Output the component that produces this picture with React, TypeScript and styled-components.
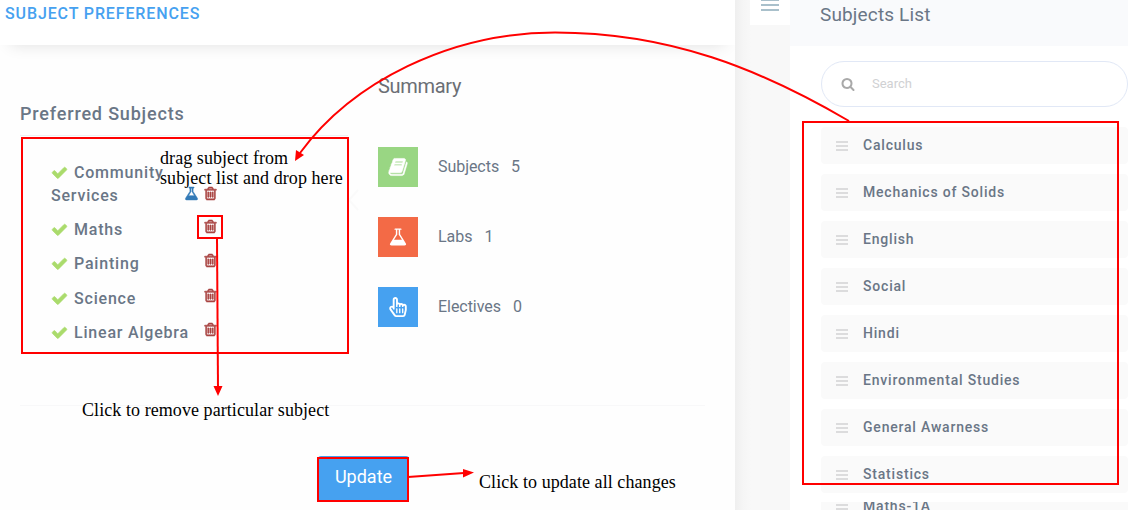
import React from "react";
import styled, { createGlobalStyle } from "styled-components";
import { FaRegHandPointer } from "react-icons/fa";

const GlobalStyle = createGlobalStyle`
  * { box-sizing: border-box; }
  body {
    margin: 0;
    overflow: hidden;
    background: #fff;
    font-family: Roboto, "Liberation Sans", sans-serif;
    color: #6a7686;
  }
  h1, h2, h3, ul { margin: 0; padding: 0; font-weight: 400; }
  ul { list-style: none; }
  svg { display: block; }
`;

const icons = {
  trash:
    "M704 736v576q0 14-9 23t-23 9h-64q-14 0-23-9t-9-23v-576q0-14 9-23t23-9h64q14 0 23 9t9 23zm256 0v576q0 14-9 23t-23 9h-64q-14 0-23-9t-9-23v-576q0-14 9-23t23-9h64q14 0 23 9t9 23zm256 0v576q0 14-9 23t-23 9h-64q-14 0-23-9t-9-23v-576q0-14 9-23t23-9h64q14 0 23 9t9 23zm128 724v-948h-896v948q0 22 7 40.5t14.5 27 10.5 8.5h832q3 0 10.5-8.5t14.5-27 7-40.5zm-672-1076h448l-48-117q-7-9-17-11h-317q-10 2-17 11zm928 32v64q0 14-9 23t-23 9h-96v948q0 83-47 143.5t-113 60.5h-832q-66 0-113-58.5t-47-141.5v-952h-96q-14 0-23-9t-9-23v-64q0-14 9-23t23-9h309l70-167q15-37 54-63t79-26h320q40 0 79 26t54 63l70 167h309q14 0 23 9t9 23z",
  check:
    "M1671 566q0 40-28 68l-724 724-136 136q-28 28-68 28t-68-28l-136-136-362-362q-28-28-28-68t28-68l136-136q28-28 68-28t68 28l294 295 656-657q28-28 68-28t68 28l136 136q28 28 28 68z",
  flask:
    "M1591 1448q56 89 21.5 152.5t-140.5 63.5h-1152q-106 0-140.5-63.5t21.5-152.5l503-793v-399h-64q-26 0-45-19t-19-45 19-45 45-19h512q26 0 45 19t19 45-19 45-45 19h-64v399zm-779-725l-272 429h712l-272-429-20-31v-436h-128v436z",
  search:
    "M1216 832q0-185-131.5-316.5t-316.5-131.5-316.5 131.5-131.5 316.5 131.5 316.5 316.5 131.5 316.5-131.5 131.5-316.5zm512 832q0 52-38 90t-90 38q-54 0-90-38l-343-342q-179 124-399 124-143 0-273.5-55.5t-225-150-150-225-55.5-273.5 55.5-273.5 150-225 225-150 273.5-55.5 273.5 55.5 225 150 150 225 55.5 273.5q0 220-124 399l343 343q37 37 37 90z",
  book:
    "M1703 478q40 57 18 129l-275 906q-19 64-76.5 107.5t-122.5 43.5h-923q-77 0-148.5-53.5t-99.5-131.5q-24-67-2-127 0-4 3-27t4-37q1-8-3-21.5t-3-19.5q2-11 8-21t16.5-23.5 16.5-23.5q23-38 45-91.5t30-91.5q3-10 .5-30t-.5-28q3-11 17-28t17-23q21-36 42-92t25-90q1-9-2.5-32t.5-28q4-13 22-30.5t22-22.5q19-26 42.5-84.5t27.5-96.5q1-8-3-25.5t-2-26.5q2-8 9-18t18-23 17-21q8-12 16.5-30.5t15-35 16-36 19.5-32 26.5-23.5 36-11.5 47.5 5.5l-1 3q38-9 51-9h761q74 0 114 56t18 130l-274 906q-36 119-71.5 153.5t-128.5 34.5h-869q-27 0-38 15-11 16-1 43 24 70 144 70h923q29 0 56-15.5t35-41.5l300-987q7-22 5-57 38 15 59 43zm-1064 2q-4 13 2 22.5t20 9.5h608q13 0 25.5-9.5t16.5-22.5l21-64q4-13-2-22.5t-20-9.5h-608q-13 0-25.5 9.5t-16.5 22.5zm-83 256q-4 13 2 22.5t20 9.5h608q13 0 25.5-9.5t16.5-22.5l21-64q4-13-2-22.5t-20-9.5h-608q-13 0-25.5 9.5t-16.5 22.5z",
};

type IconName = keyof typeof icons;

interface IconProps {
  name: IconName;
  size: number;
  color: string;
  weight?: number;
}

function Icon({ name, size, color, weight = 0 }: IconProps) {
  return (
    <svg width={size} height={size} viewBox="0 0 1792 1792" fill={color} stroke={color} strokeWidth={weight}>
      <path d={icons[name]} />
    </svg>
  );
}

const Page = styled.div`
  position: relative;
  display: flex;
  width: 1128px;
  height: 510px;
  overflow: hidden;
`;

const Main = styled.main`
  display: flex;
  flex-direction: column;
  width: 735px;
  background: #fefefe;
`;

const MainHeader = styled.header`
  height: 45px;
  padding: 4px 5px 0;
  background: #fff;
  box-shadow: 0 10px 16px -10px rgba(0, 0, 0, 0.12);
`;

const PageTitle = styled.h1`
  font-size: 16px;
  line-height: 20px;
  font-weight: 500;
  letter-spacing: 0.88px;
  color: #46a1f0;
`;

const Columns = styled.div`
  display: flex;
  height: 361px;
  margin: 0 30px 0 20px;
  border-bottom: 1px solid #f8f8f9;
`;

const Preferred = styled.section`
  width: 328px;
  margin-right: 30px;
  padding-top: 57px;
`;

const SectionTitle = styled.h2`
  font-size: 18px;
  line-height: 24px;
  font-weight: 500;
  letter-spacing: 0.82px;
`;

const DropZone = styled.ul`
  height: 217px;
  margin-top: 9px;
  padding: 25px 0 0 31px;
  border-top: 1px solid #eef0f2;
`;

const Chosen = styled.li<{ $tall?: boolean }>`
  display: flex;
  width: 167px;
  height: ${(p) => (p.$tall ? 57 : 34.3)}px;
  justify-content: space-between;
`;

const ChosenName = styled.div`
  flex: 1;
  font-size: 16px;
  line-height: 23px;
  font-weight: 500;
  letter-spacing: 0.8px;
  white-space: nowrap;

  svg {
    display: inline-block;
    margin-right: 6px;
    vertical-align: -3px;
  }
`;

const ChosenActions = styled.div<{ $tall?: boolean }>`
  display: flex;
  gap: 4px;
  padding-top: ${(p) => (p.$tall ? 25 : 1)}px;
`;

const Summary = styled.section`
  padding-top: 27px;
`;

const SummaryTitle = styled.h2`
  height: 75px;
  font-size: 20px;
  line-height: 28px;
  letter-spacing: -0.3px;
  color: #6b6f75;
`;

const SummaryRow = styled.div`
  display: flex;
  height: 40px;
  margin-bottom: 30px;
  font-size: 16px;
  line-height: 39px;
  letter-spacing: -0.05px;
`;

const Tile = styled.div<{ $color: string }>`
  display: grid;
  place-items: center;
  width: 40px;
  height: 40px;
  margin-right: 20px;
  background: ${(p) => p.$color};
  color: #fff;
`;

const Count = styled.span`
  margin-left: 12px;
`;

const Footer = styled.footer`
  display: flex;
  padding: 50px 0 0 318px;
`;

const UpdateButton = styled.button`
  width: 91px;
  height: 45px;
  padding: 0 0 4px;
  border: 0;
  border-radius: 3px;
  background: #46a1f0;
  color: #fff;
  font: 400 18px Roboto, sans-serif;
`;

const Gutter = styled.div`
  display: flex;
  justify-content: flex-end;
  width: 55px;
  background: linear-gradient(90deg, #efefef 0, #f5f5f5 8px, #f8f8f8 16px);
`;

const MenuButton = styled.div`
  display: flex;
  flex-direction: column;
  align-items: center;
  gap: 3px;
  width: 40px;
  height: 25px;
  background: #fff;
`;

const MenuBar = styled.i<{ $first?: boolean }>`
  width: 18px;
  height: ${(p) => (p.$first ? 1 : 2)}px;
  background: #a9c0cb;
`;

const Sidebar = styled.aside`
  width: 338px;
  background: #fff;
`;

const SideHeader = styled.header`
  height: 46px;
  padding: 1px 30px;
  background: #f9fafc;
  font-size: 19px;
  line-height: 28px;
  letter-spacing: 0.15px;
`;

const SearchBox = styled.div`
  display: flex;
  align-items: center;
  gap: 17px;
  height: 46px;
  margin: 15px 0 20px 31px;
  padding: 0 0 1px 19px;
  border: 1px solid #e1e8f6;
  border-radius: 23px;
  color: #d0d1d3;
  font-size: 13px;
`;

const SubjectList = styled.ul`
  display: flex;
  flex-direction: column;
  gap: 10px;
  margin-left: 31px;
`;

const SubjectRow = styled.li`
  display: flex;
  align-items: center;
  gap: 15px;
  height: 37px;
  padding-left: 15px;
  border-radius: 4px;
  background: #fafafa;
  font-size: 14px;
  font-weight: 500;
  letter-spacing: 0.8px;
`;

const SubjectName = styled.span`
  padding-bottom: 2px;
`;

const Handle = styled.i`
  width: 12px;
  height: 10px;
  border: solid #dcdcdd;
  border-width: 2px 0;
  background: linear-gradient(#dcdcdd, #dcdcdd) 0 2px / 12px 2px no-repeat;
`;

const CutList = styled.div`
  height: 8px;
  margin: 9px 0 0 31px;
  overflow: hidden;
  display: flex;
  align-items: center;
  gap: 15px;
  padding-left: 15px;
  background: #fafafa;
  font-size: 14px;
  font-weight: 500;
  letter-spacing: 0.8px;
  line-height: 16px;
`;

const CutHandle = styled(Handle)`
  flex: none;
  margin-top: 6px;
`;

const Overlay = styled.svg`
  position: absolute;
  inset: 0;
`;

const Note = styled.p<{ $x: number; $y: number }>`
  position: absolute;
  left: ${(p) => p.$x}px;
  top: ${(p) => p.$y}px;
  margin: 0;
  color: #000;
  font: 18px/20px "Liberation Serif", serif;
  letter-spacing: 0.07px;
  white-space: nowrap;
`;

const chosen = ["Maths", "Painting", "Science", "Linear Algebra"];

const subjects = [
  "Calculus",
  "Mechanics of Solids",
  "English",
  "Social",
  "Hindi",
  "Environmental Studies",
  "General Awarness",
  "Statistics",
];

export default function App() {
  return (
    <Page>
      <GlobalStyle />
      <Main>
        <MainHeader>
          <PageTitle>SUBJECT PREFERENCES</PageTitle>
        </MainHeader>
        <Columns>
          <Preferred>
            <SectionTitle>Preferred Subjects</SectionTitle>
            <DropZone>
              <Chosen $tall>
                <ChosenName>
                  <Icon name="check" size={17} color="#aadb6c" weight={60} />
                  Community
                  <br />
                  Services
                </ChosenName>
                <ChosenActions $tall>
                  <Icon name="flask" size={15} color="#337ab7" weight={60} />
                  <Icon name="trash" size={15} color="#a94442" weight={75} />
                </ChosenActions>
              </Chosen>
              {chosen.map((name) => (
                <Chosen key={name}>
                  <ChosenName>
                    <Icon name="check" size={17} color="#aadb6c" weight={60} />
                    {name}
                  </ChosenName>
                  <ChosenActions>
                    <Icon name="trash" size={15} color="#a94442" weight={75} />
                  </ChosenActions>
                </Chosen>
              ))}
            </DropZone>
          </Preferred>
          <Summary>
            <SummaryTitle>Summary</SummaryTitle>
            <SummaryRow>
              <Tile $color="#99d683">
                <Icon name="book" size={20} color="#fff" weight={50} />
              </Tile>
              Subjects <Count>5</Count>
            </SummaryRow>
            <SummaryRow>
              <Tile $color="#f36a46">
                <Icon name="flask" size={20} color="#fff" />
              </Tile>
              Labs <Count>1</Count>
            </SummaryRow>
            <SummaryRow>
              <Tile $color="#46a1f0">
                <FaRegHandPointer size={20} />
              </Tile>
              Electives <Count>0</Count>
            </SummaryRow>
          </Summary>
        </Columns>
        <Footer>
          <UpdateButton>Update</UpdateButton>
        </Footer>
      </Main>
      <Gutter>
        <MenuButton>
          <MenuBar $first />
          <MenuBar />
          <MenuBar />
        </MenuButton>
      </Gutter>
      <Sidebar>
        <SideHeader>Subjects List</SideHeader>
        <SearchBox>
          <Icon name="search" size={14} color="#a9a9a9" />
          Search
        </SearchBox>
        <SubjectList>
          {subjects.map((name) => (
            <SubjectRow key={name}>
              <Handle />
              <SubjectName>{name}</SubjectName>
            </SubjectRow>
          ))}
        </SubjectList>
        <CutList>
          <CutHandle />
          Maths-1A
        </CutList>
      </Sidebar>

      <Overlay width="1128" height="510" fill="none" stroke="#f00" strokeWidth="2">
        <path d="M358 190L349 200L358 210" stroke="#fafafa" />
        <rect x="22" y="138" width="326" height="215" />
        <rect x="198" y="216" width="24" height="22" />
        <rect x="803" y="122" width="315" height="362" />
        <rect x="318" y="458" width="90" height="43" />
        <path d="M849 121C760 69 670 32.500 555 32.500C450 32.500 352 82 300 153" />
        <path d="M217 238L218 388" />
        <path d="M408 477L464 473" />
        <path d="M295 161L296 150L304 155Z M213.500 386H222.500L218 396Z M463 469L474 472.500L463 477.500Z" fill="#f00" stroke="none" />
      </Overlay>
      <Note $x={160} $y={148}>
        drag subject from
        <br />
        subject list and drop here
      </Note>
      <Note $x={82} $y={400}>Click to remove particular subject</Note>
      <Note $x={479} $y={472}>Click to update all changes</Note>
    </Page>
  );
}
